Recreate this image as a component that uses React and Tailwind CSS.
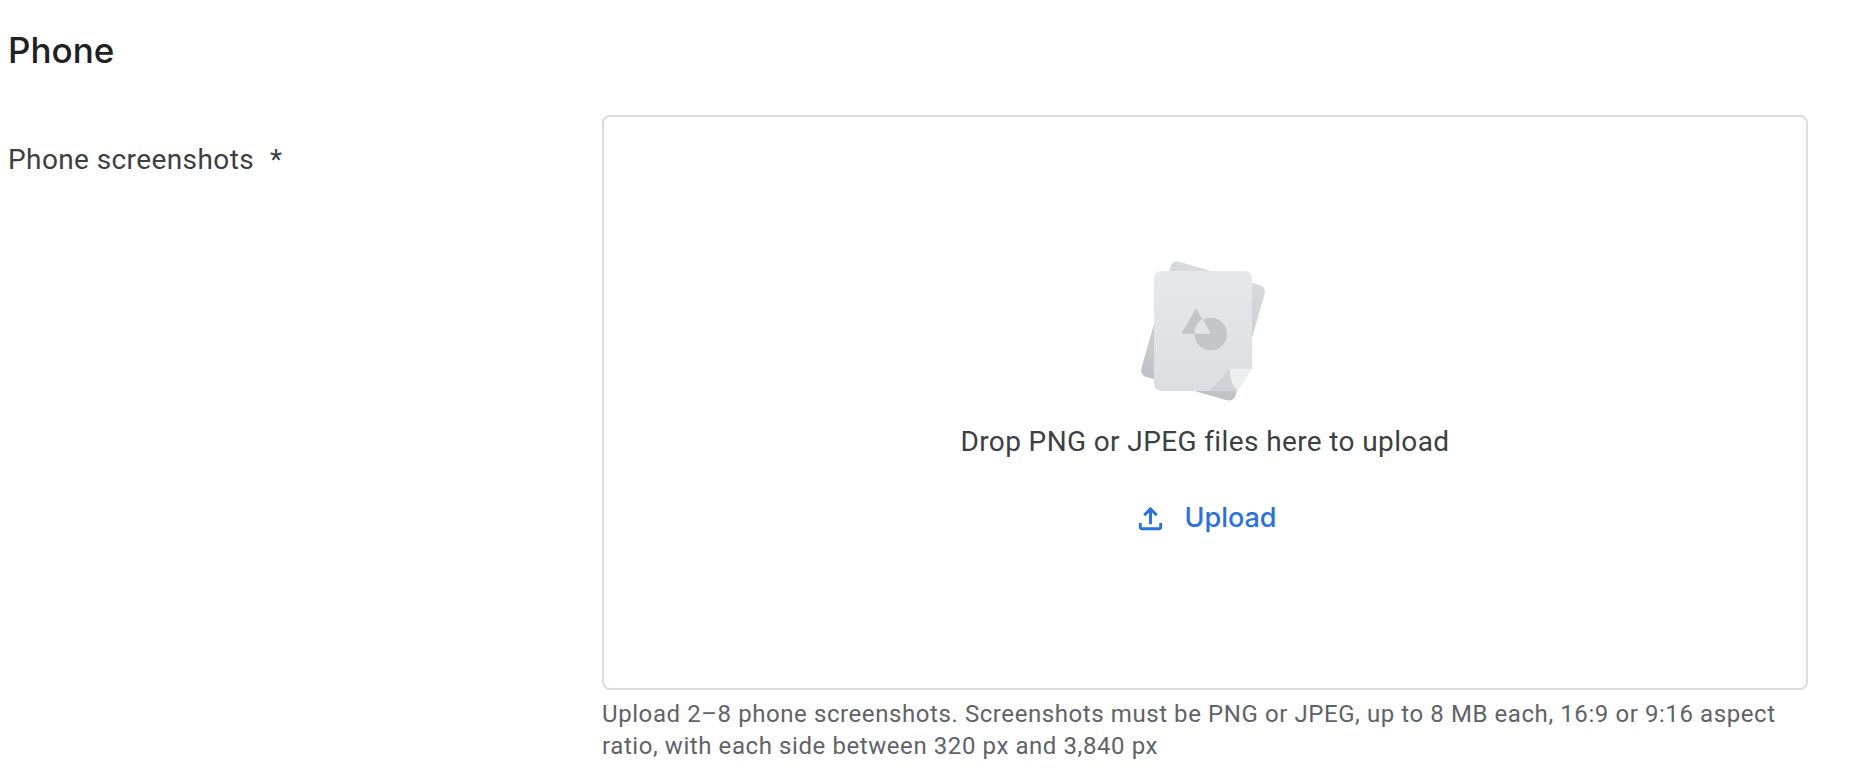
function PagesArt() {
  return (
    <svg width="130" height="146" viewBox="0 0 130 146" fill="none" className="-ml-0.5 shrink-0">
      <defs>
        <linearGradient id="backSheet" x1="0" y1="0" x2="0" y2="1">
          <stop offset="0" stopColor="#d8dadd" />
          <stop offset="1" stopColor="#bfc2c6" />
        </linearGradient>
        <linearGradient id="frontSheet" x1="0" y1="0" x2="0" y2="1">
          <stop offset="0" stopColor="#e8e9ec" />
          <stop offset="1" stopColor="#dcdde1" />
        </linearGradient>
      </defs>
      <rect x="15" y="13" width="98" height="120" rx="7" fill="url(#backSheet)" transform="rotate(16 64 73)" />
      <path d="M15 20 a7 7 0 0 1 7 -7 h84 a7 7 0 0 1 7 7 v90.7 L98 133 H22 a7 7 0 0 1 -7 -7 z" fill="url(#frontSheet)" />
      <path d="M90.7 112 L70 133 H98 Z" fill="#d0d2d5" />
      <path d="M90.7 110.7 H113 L98 132 Q90.7 124 90.7 110.7 Z" fill="#eeeff1" />
      <circle cx="71.7" cy="76" r="16.3" fill="#c3c5c9" />
      <path d="M57 50.3 L42.3 75.7 H72 Z" fill="#c3c5c9" />
      <path d="M63.3 61 L72 75.7 H55.5 A16.3 16.3 0 0 1 63.3 61 Z" fill="#e3e4e7" />
    </svg>
  );
}

function UploadIcon() {
  return (
    <svg width="35" height="35" viewBox="0 0 24 24" fill="currentColor" className="shrink-0">
      <path d="M18 15v3H6v-3H4v3c0 1.1.9 2 2 2h12c1.1 0 2-.9 2-2v-3h-2zM7 9l1.41 1.41L11 7.83V16h2V7.83l2.59 2.58L17 9l-5-5-5 5z" />
    </svg>
  );
}

export default function App() {
  return (
    <div className="h-[780px] w-[1872px] overflow-hidden bg-white pl-2 pr-16 font-['Roboto',sans-serif]">
      <h2 className="pt-[28px] text-[35px] leading-[44px] font-medium text-[#202124] font-['Inter',sans-serif]">Phone</h2>
      <div className="mt-[43px] flex">
        <div className="w-[594px] shrink-0 pt-[27px] text-[28px] leading-[36px] tracking-[0.4px] text-[#3c4043]">
          Phone screenshots<span className="ml-4">*</span>
        </div>
        <div className="w-[1206px]">
          <div className="flex h-[575px] flex-col items-center rounded-lg border-2 border-[#dadce0] pt-[141px]">
            <PagesArt />
            <p className="mt-[18px] text-[28px] leading-[40px] tracking-[0.38px] text-[#3c4043]">Drop PNG or JPEG files here to upload</p>
            <button type="button" className="mt-[36px] flex items-center gap-[16px] text-[27px] leading-[40px] font-medium text-[#2a71e0] font-['Inter',sans-serif]">
              <UploadIcon />
              Upload
            </button>
          </div>
          <p className="mt-[8px] text-[24px] leading-[32px] tracking-[0.58px] text-[#5f6368]">
            Upload 2–8 phone screenshots. Screenshots must be PNG or JPEG, up to 8 MB each, 16:9 or 9:16 aspect ratio, with each side between 320 px and 3,840 px
          </p>
        </div>
      </div>
    </div>
  );
}
